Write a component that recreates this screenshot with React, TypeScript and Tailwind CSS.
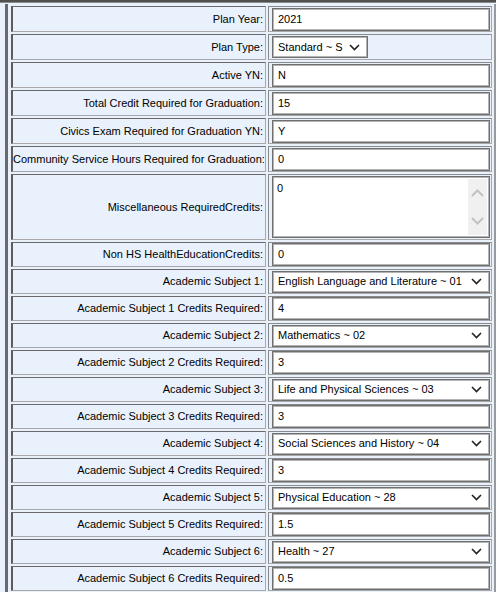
import React from 'react';

type Row =
  | { label: string; kind: 'input'; value: string }
  | { label: string; kind: 'select'; value: string; short?: boolean }
  | { label: string; kind: 'textarea'; value: string };

const rows: Row[] = [
  { label: 'Plan Year:', kind: 'input', value: '2021' },
  { label: 'Plan Type:', kind: 'select', value: 'Standard ~ S', short: true },
  { label: 'Active YN:', kind: 'input', value: 'N' },
  { label: 'Total Credit Required for Graduation:', kind: 'input', value: '15' },
  { label: 'Civics Exam Required for Graduation YN:', kind: 'input', value: 'Y' },
  { label: 'Community Service Hours Required for Graduation:', kind: 'input', value: '0' },
  { label: 'Miscellaneous RequiredCredits:', kind: 'textarea', value: '0' },
  { label: 'Non HS HealthEducationCredits:', kind: 'input', value: '0' },
  { label: 'Academic Subject 1:', kind: 'select', value: 'English Language and Literature ~ 01' },
  { label: 'Academic Subject 1 Credits Required:', kind: 'input', value: '4' },
  { label: 'Academic Subject 2:', kind: 'select', value: 'Mathematics ~ 02' },
  { label: 'Academic Subject 2 Credits Required:', kind: 'input', value: '3' },
  { label: 'Academic Subject 3:', kind: 'select', value: 'Life and Physical Sciences ~ 03' },
  { label: 'Academic Subject 3 Credits Required:', kind: 'input', value: '3' },
  { label: 'Academic Subject 4:', kind: 'select', value: 'Social Sciences and History ~ 04' },
  { label: 'Academic Subject 4 Credits Required:', kind: 'input', value: '3' },
  { label: 'Academic Subject 5:', kind: 'select', value: 'Physical Education ~ 28' },
  { label: 'Academic Subject 5 Credits Required:', kind: 'input', value: '1.5' },
  { label: 'Academic Subject 6:', kind: 'select', value: 'Health ~ 27' },
  { label: 'Academic Subject 6 Credits Required:', kind: 'input', value: '0.5' },
];

const boxCls =
  'border border-[#6f6f6f] shadow-[inset_0_0_0_1px_#b4b4b4] bg-white text-[11px] text-black';

function Chevron({ color = '#222' }: { color?: string }) {
  return (
    <svg width="11" height="7" viewBox="0 0 11 7" fill="none">
      <path d="M1 1l4.5 4.5L10 1" stroke={color} strokeWidth="1.6" />
    </svg>
  );
}

function Field({ row }: { row: Row }) {
  if (row.kind === 'select') {
    return (
      <div
        className={`${boxCls} h-[22px] flex items-center justify-between pl-[5px] pr-[7px] ${
          row.short ? 'w-[96px]' : 'w-full'
        }`}
      >
        <span className="whitespace-nowrap">{row.value}</span>
        <Chevron />
      </div>
    );
  }
  if (row.kind === 'textarea') {
    return (
      <div className={`${boxCls} h-[62px] w-full flex`}>
        <div className="flex-1 pl-[4px] pt-[3px]">{row.value}</div>
        <div className="w-[19px] my-[2px] mr-[2px] bg-[#f0f0f0] flex flex-col items-center justify-around">
          <svg width="13" height="8" viewBox="0 0 13 8" fill="none">
            <path d="M1 7l5.5-5.5L12 7" stroke="#c2c2c2" strokeWidth="2" />
          </svg>
          <svg width="13" height="8" viewBox="0 0 13 8" fill="none">
            <path d="M1 1l5.5 5.5L12 1" stroke="#c2c2c2" strokeWidth="2" />
          </svg>
        </div>
      </div>
    );
  }
  return (
    <div className={`${boxCls} h-[23px] w-full flex items-center pl-[5px]`}>{row.value}</div>
  );
}

export default function App() {
  return (
    <div className="min-h-screen bg-[#e8f1fc] font-['Liberation_Sans',Arial,sans-serif] text-[11px] text-black">
      <div className="h-[2px] bg-[#505050]" />
      <div className="h-px bg-[#8a8a8a]" />
      <div className="pl-[5px] pt-[1px]">
        <table className="table-fixed w-[491px] border-separate border-spacing-[2px] border-l-[3px] border-r-2 border-l-[#6a6a6a] border-r-[#9a9a9a] pl-px">
          <colgroup>
            <col className="w-[255px]" />
            <col />
          </colgroup>
          <tbody>
            {rows.map((row, i) => (
              <tr key={row.label}>
                <td
                  className={`text-right align-middle pr-[2px] whitespace-nowrap border-l-2 border-t border-r border-b border-l-[#5c5c5c] border-t-[#6a6a6a] border-r-[#a8a8a8] border-b-[#a8a8a8] ${
                    row.kind === 'textarea' ? 'h-[66px]' : i < 6 ? 'h-[26px]' : 'h-[25px]'
                  }`}
                >
                  {row.label}
                </td>
                <td className="align-middle pl-[3px] pr-px border-l border-t border-r border-b border-l-[#8a8a8a] border-t-[#8a8a8a] border-r-[#a8a8a8] border-b-[#a8a8a8]">
                  <Field row={row} />
                </td>
              </tr>
            ))}
          </tbody>
        </table>
      </div>
    </div>
  );
}
